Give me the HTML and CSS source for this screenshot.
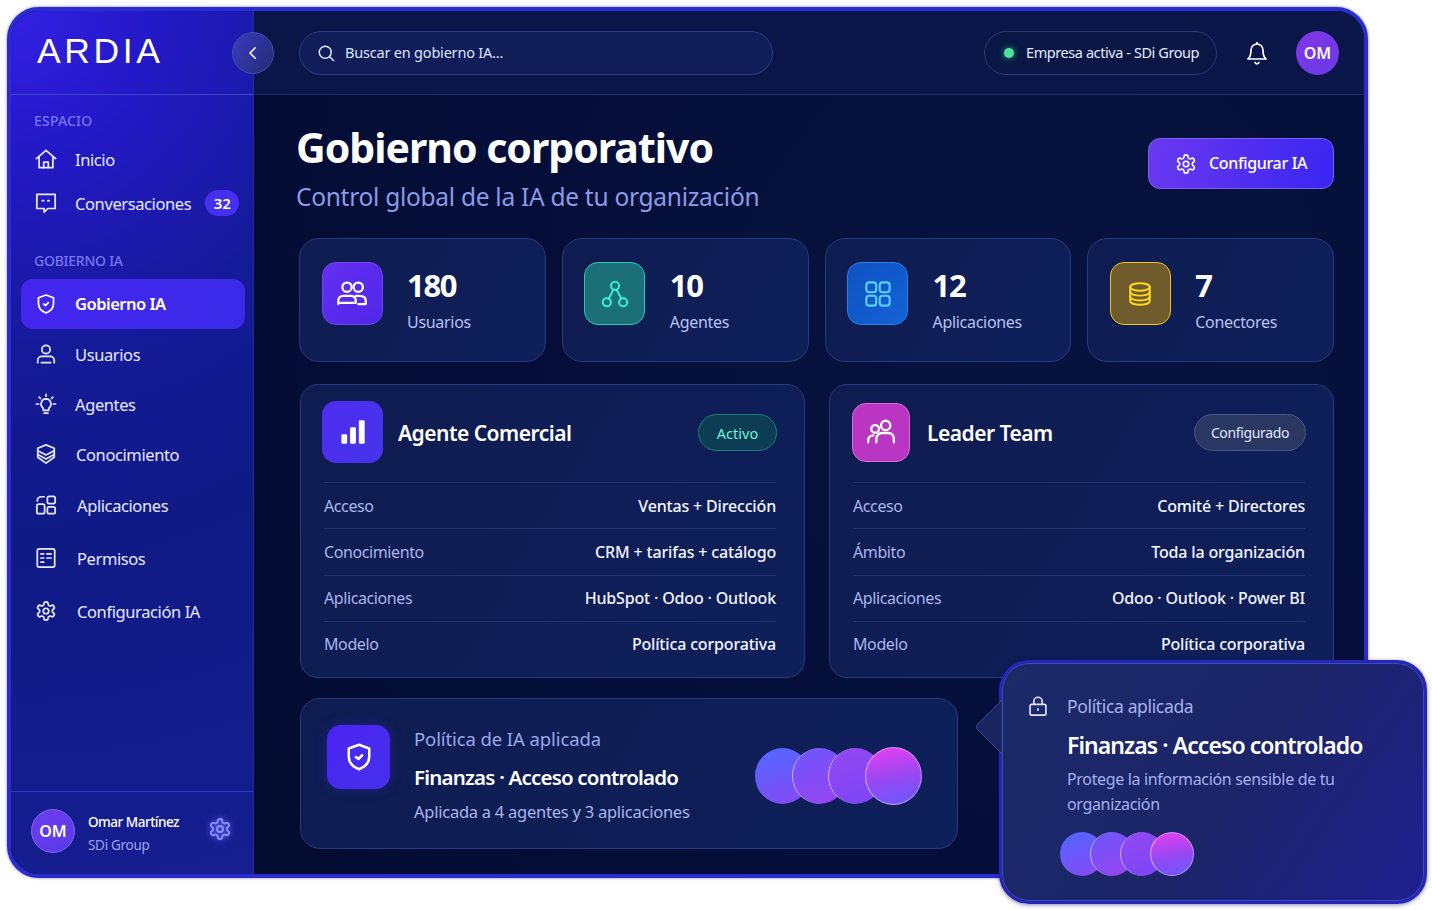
FILE: index.html
```html
<!DOCTYPE html>
<html lang="es">
<head>
<meta charset="utf-8">
<title>ARDIA - Gobierno corporativo</title>
<link rel="stylesheet" href="styles.css">
</head>
<body>
<svg class="defs" aria-hidden="true">
  <symbol id="gear" viewBox="0 0 24 24"><path d="M12.22 2h-.44a2 2 0 0 0-2 2v.18a2 2 0 0 1-1 1.73l-.43.25a2 2 0 0 1-2 0l-.15-.08a2 2 0 0 0-2.73.73l-.22.38a2 2 0 0 0 .73 2.73l.15.1a2 2 0 0 1 1 1.72v.51a2 2 0 0 1-1 1.74l-.15.09a2 2 0 0 0-.73 2.73l.22.38a2 2 0 0 0 2.73.73l.15-.08a2 2 0 0 1 2 0l.43.25a2 2 0 0 1 1 1.73V20a2 2 0 0 0 2 2h.44a2 2 0 0 0 2-2v-.18a2 2 0 0 1 1-1.73l.43-.25a2 2 0 0 1 2 0l.15.08a2 2 0 0 0 2.73-.73l.22-.39a2 2 0 0 0-.73-2.73l-.15-.08a2 2 0 0 1-1-1.74v-.5a2 2 0 0 1 1-1.74l.15-.09a2 2 0 0 0 .73-2.73l-.22-.38a2 2 0 0 0-2.73-.73l-.15.08a2 2 0 0 1-2 0l-.43-.25a2 2 0 0 1-1-1.73V4a2 2 0 0 0-2-2z"/><circle cx="12" cy="12" r="3"/></symbol>
  <symbol id="shield" viewBox="0 0 24 24"><path d="M12 2.2l8.200 3v6.300c0 4.900-3.300 8.400-8.200 10.300-4.900-1.900-8.200-5.400-8.200-10.300V5.200z"/><path d="M9.500 12l2 1.600 3-3"/></symbol>
</svg>

<div class="app">
  <aside class="sidebar">
    <div class="brand"><span class="logo">ARDIA</span></div>
    <nav class="nav">
      <p class="nav-label">ESPACIO</p>
      <a class="nav-item nav-short">
        <svg class="nav-icon" viewBox="0 0 24 24"><path d="M1.500 11.500 12 2.500l10.500 9"/><path d="M4.500 9.500V21.500h15V9.500"/><path d="M9.500 21.500v-6h5v6"/></svg>
        <span>Inicio</span>
      </a>
      <a class="nav-item nav-short">
        <svg class="nav-icon" viewBox="0 0 24 24"><path d="M2 2.500h20v15.500h-8l-4 4v-4H2z"/><path d="M8 9.500h1.500M14 9.500h1.500"/></svg>
        <span>Conversaciones</span>
        <b class="count">32</b>
      </a>
      <p class="nav-label nav-label-second">GOBIERNO IA</p>
      <a class="nav-item active">
        <svg class="nav-icon"><use href="#shield"/></svg>
        <span>Gobierno IA</span>
      </a>
      <a class="nav-item">
        <svg class="nav-icon" viewBox="0 0 24 24"><circle cx="12" cy="7" r="4.500"/><path d="M3 21.500v-2.500c0-2.500 2-4.500 4.500-4.500h9c2.500 0 4.500 2 4.500 4.500v2.500"/><path d="M7 21.500h10"/></svg>
        <span>Usuarios</span>
      </a>
      <a class="nav-item">
        <svg class="nav-icon" viewBox="0 0 24 24"><path d="M12 6.500a5.500 5.500 0 0 1 3 10v2.500H9v-2.500a5.500 5.500 0 0 1 3-10z"/><path d="M10 22h4M12 1.500v2M1.500 12h2.500M20 12h2.500M4.500 4.500l1.500 1.500M19.500 4.500 18 6"/></svg>
        <span>Agentes</span>
      </a>
      <a class="nav-item nav-text-mid">
        <svg class="nav-icon" viewBox="0 0 24 24"><path d="M12 2l9 3.800v2.700L12 13 3 8.500V5.800z"/><path d="M3 8.500v7l9 6.500 9-6.500v-7"/><path d="M3 12.500l9 5 9-5"/></svg>
        <span>Conocimiento</span>
      </a>
      <a class="nav-item nav-text-shift mt1">
        <svg class="nav-icon" viewBox="0 0 24 24"><rect x="2" y="11" width="8.500" height="10.500" rx="2"/><rect x="13.500" y="2.500" width="8.500" height="8" rx="2"/><rect x="13.500" y="14" width="8.500" height="7.500" rx="2"/><path d="M2.500 7.500c0-3 1.500-4.500 5-4.500h2.500"/></svg>
        <span>Aplicaciones</span>
      </a>
      <a class="nav-item nav-text-shift mt3">
        <svg class="nav-icon" viewBox="0 0 24 24"><rect x="2.500" y="2" width="19" height="20" rx="2"/><path d="M6.500 7.500h3M13 7.500h4.500M6.500 12h3M13 12h4.500M6.500 16.500h3"/></svg>
        <span>Permisos</span>
      </a>
      <a class="nav-item nav-text-shift mt3">
        <svg class="nav-icon"><use href="#gear"/></svg>
        <span>Configuración IA</span>
      </a>
    </nav>
    <div class="user">
      <div class="avatar avatar-user">OM</div>
      <div class="user-text">
        <strong>Omar Martínez</strong>
        <span>SDi Group</span>
      </div>
      <svg class="user-gear"><use href="#gear"/></svg>
    </div>
  </aside>

  <button class="collapse" aria-label="Contraer">
    <svg viewBox="0 0 24 24"><path d="M15 5l-7 7 7 7"/></svg>
  </button>

  <div class="workspace">
    <header class="topbar">
      <div class="search">
        <svg viewBox="0 0 24 24"><circle cx="11" cy="11" r="8"/><path d="M17 17l5 5"/></svg>
        <span>Buscar en gobierno IA...</span>
      </div>
      <div class="status"><i class="dot"></i><span>Empresa activa - SDi Group</span></div>
      <svg class="bell" viewBox="0 0 24 24"><path d="M6 9a6 6 0 0 1 12 0c0 6 1 7.500 3 9H3c2-1.500 3-3 3-9z"/><path d="M10 21.500a2.200 2.200 0 0 0 4 0M12 3V1.500"/></svg>
      <div class="avatar avatar-top">OM</div>
    </header>

    <main class="content">
      <section class="page-head">
        <div>
          <h1>Gobierno corporativo</h1>
          <p>Control global de la IA de tu organización</p>
        </div>
        <button class="primary">
          <svg><use href="#gear"/></svg>
          <span>Configurar IA</span>
        </button>
      </section>

      <section class="stats">
        <article class="stat">
          <div class="tile tile-violet"><svg viewBox="0 0 24 24"><circle cx="8" cy="6.500" r="3.700"/><circle cx="17" cy="6.500" r="3.700"/><path d="M1 20v-2.500c0-2.500 2-4 4-4h6c2.500 0 4 1.500 4 4V19H2"/><path d="M15 13.500h3c3 0 5 1.500 5 4V20h-6"/></svg></div>
          <div><strong>180</strong><span>Usuarios</span></div>
        </article>
        <article class="stat">
          <div class="tile tile-teal"><svg viewBox="0 0 24 24"><circle cx="12" cy="5" r="3.500"/><circle cx="5" cy="19" r="3.500"/><circle cx="19" cy="19" r="3.500"/><path d="M10.500 8.500 6.500 16M13.500 8.500l4 7.500"/></svg></div>
          <div><strong>10</strong><span>Agentes</span></div>
        </article>
        <article class="stat">
          <div class="tile tile-blue"><svg viewBox="0 0 24 24"><rect x="2" y="2" width="8.500" height="8.500" rx="2.500"/><rect x="13.500" y="2" width="8.500" height="8.500" rx="2.500"/><rect x="2" y="13.500" width="8.500" height="8.500" rx="2.500"/><rect x="13.500" y="13.500" width="8.500" height="8.500" rx="2.500"/></svg></div>
          <div><strong>12</strong><span>Aplicaciones</span></div>
        </article>
        <article class="stat">
          <div class="tile tile-gold"><svg viewBox="0 0 24 24"><ellipse cx="12" cy="5.500" rx="9" ry="3.500"/><path d="M3 5.500v13c0 2 4 3.500 9 3.500s9-1.500 9-3.500v-13"/><path d="M3 10c0 2 4 3.500 9 3.500s9-1.500 9-3.500"/><path d="M3 14.500c0 2 4 3.500 9 3.500s9-1.500 9-3.500"/></svg></div>
          <div><strong>7</strong><span>Conectores</span></div>
        </article>
      </section>

      <section class="agents">
        <article class="agent">
          <header class="agent-head">
            <div class="agent-icon agent-icon-violet"><svg viewBox="0 0 24 24"><rect x="2" y="14" width="5" height="8" rx="1"/><rect x="9.500" y="8" width="5" height="14" rx="1"/><rect x="17" y="2" width="5" height="20" rx="1"/></svg></div>
            <h2>Agente Comercial</h2>
            <span class="pill pill-on">Activo</span>
          </header>
          <dl>
            <div><dt>Acceso</dt><dd>Ventas + Dirección</dd></div>
            <div><dt>Conocimiento</dt><dd>CRM + tarifas + catálogo</dd></div>
            <div><dt>Aplicaciones</dt><dd>HubSpot · Odoo · Outlook</dd></div>
            <div><dt>Modelo</dt><dd>Política corporativa</dd></div>
          </dl>
        </article>
        <article class="agent">
          <header class="agent-head">
            <div class="agent-icon agent-icon-pink"><svg viewBox="0 0 24 24"><circle cx="7" cy="8.500" r="3.300"/><circle cx="16" cy="5.500" r="4"/><path d="M1 20v-2c0-2.500 2-4 4.500-4"/><path d="M8 20v-3c0-3 2.500-5 5-5h5.500c2.500 0 4.500 2 4.500 5v3"/></svg></div>
            <h2>Leader Team</h2>
            <span class="pill pill-set">Configurado</span>
          </header>
          <dl>
            <div><dt>Acceso</dt><dd>Comité + Directores</dd></div>
            <div><dt>Ámbito</dt><dd>Toda la organización</dd></div>
            <div><dt>Aplicaciones</dt><dd>Odoo · Outlook · Power BI</dd></div>
            <div><dt>Modelo</dt><dd>Política corporativa</dd></div>
          </dl>
        </article>
      </section>

      <section class="policy">
        <div class="policy-icon"><svg><use href="#shield"/></svg></div>
        <div class="policy-text">
          <p class="policy-label">Política de IA aplicada</p>
          <h3>Finanzas · Acceso controlado</h3>
          <p class="policy-sub">Aplicada a 4 agentes y 3 aplicaciones</p>
        </div>
        <div class="orbs orbs-big"><i class="orb o1"></i><i class="orb o2"></i><i class="orb o3"></i><i class="orb o4"></i></div>
      </section>
    </main>
  </div>
</div>

<aside class="popover">
  <svg class="pop-arrow" viewBox="0 0 27 56"><path d="M27 1 2.500 25.500q-2 2.500 0 5L27 55z"/></svg>
  <div class="pop-head">
    <svg viewBox="0 0 24 24"><rect x="2.500" y="10" width="19" height="13" rx="2"/><path d="M7 10V6.500a5 5 0 0 1 10 0V10"/><path d="M12 15.500v1.500"/></svg>
    <span>Política aplicada</span>
  </div>
  <h3>Finanzas · Acceso controlado</h3>
  <p>Protege la información sensible de tu organización</p>
  <div class="orbs orbs-small"><i class="orb o1"></i><i class="orb o2"></i><i class="orb o3"></i><i class="orb o4"></i></div>
</aside>
</body>
</html>
```

FILE: styles.css
```css
* { box-sizing: border-box; }
html, body { margin: 0; padding: 0; }
body {
  width: 1432px;
  height: 910px;
  position: relative;
  overflow: hidden;
  background: #fff;
  font-family: "Noto Sans", "Open Sans", sans-serif;
  color: #fff;
}
p, h1, h2, h3, dl, dd, dt { margin: 0; }
svg { display: block; fill: none; stroke: currentColor; stroke-width: 2; stroke-linecap: round; stroke-linejoin: round; }
.defs { display: none; }

.app {
  position: relative;
  margin: 7px 0 0 7px;
  width: 1361px;
  height: 871px;
  display: flex;
  border: 4px solid #2a2bd0;
  border-radius: 32px;
  overflow: hidden;
  background: #050e3c;
  box-shadow: 0 0 3px rgba(30, 30, 120, .6);
}

/* Sidebar */
.sidebar {
  width: 243px;
  flex: none;
  display: flex;
  flex-direction: column;
  background: radial-gradient(circle at 0 0, #3420e4 0, #2419c8 15%, #151a98 38%, #0f1a85 60%, #161e90 100%);
  border-right: 1px solid #26308c;
}
.brand {
  height: 84px;
  flex: none;
  padding: 20px 0 0 26px;
  border-bottom: 1px solid #3f45c8;
}
.logo {
  display: block;
  font-family: "Liberation Sans", sans-serif;
  font-size: 35.500px;
  line-height: 40px;
  letter-spacing: 3.600px;
  font-weight: 400;
}
.nav { flex: 1; padding: 0 8px 0 10px; }
.nav-label {
  font-size: 14px;
  line-height: 20px;
  letter-spacing: .2px;
  color: #7577f5;
  font-weight: 500;
  margin: 16px 0 0 13px;
}
.nav-label-second { margin-top: 26px; letter-spacing: -.25px; }
.nav-item {
  display: flex;
  align-items: center;
  height: 50px;
  padding-left: 14px;
  font-size: 16.500px;
  letter-spacing: -.4px;
  color: #e6e9ff;
  border-radius: 12px;
}
.nav-short { height: 44px; }
.nav-label + .nav-short { margin-top: 6px; }
.nav-item > span { margin-left: 18px; }
.nav-item.nav-text-mid > span { margin-left: 19px; }
.nav-item.nav-text-shift > span { margin-left: 20px; }
.nav-icon { width: 22px; height: 22px; flex: none; stroke-width: 1.900; }
.active {
  margin-top: 8px;
  background: linear-gradient(100deg, #4426ee, #3a2ae8);
  font-weight: 600;
  letter-spacing: -.5px;
  color: #fff;
}
.active > span { margin-top: -2px; }
.mt1 { margin-top: 1px; }
.mt3 { margin-top: 3px; }
.count {
  margin-left: 14px;
  width: 34px;
  height: 26px;
  border-radius: 13px;
  background: #4430ee;
  font-size: 15px;
  letter-spacing: 0;
  line-height: 26px;
  text-align: center;
  font-weight: 600;
  color: #fff;
}
.user {
  height: 83px;
  flex: none;
  display: flex;
  align-items: center;
  padding: 0 0 4px 20px;
  border-top: 1px solid #2e36c0;
}
.avatar {
  display: flex;
  align-items: center;
  justify-content: center;
  flex: none;
  border-radius: 50%;
  font-weight: 600;
}
.avatar-user {
  width: 44px;
  height: 44px;
  font-size: 16px;
  background: linear-gradient(140deg, #6d3df0, #5a3ae8);
  border: 1px solid #7f63ee;
}
.user-text { margin-left: 13px; width: 120px; padding-top: 3px; }
.user-text strong { display: block; font-size: 13.500px; letter-spacing: -.5px; line-height: 18px; font-weight: 500; margin-top: 1px; }
.user-text span { display: block; font-size: 13.500px; letter-spacing: -.3px; line-height: 18px; margin-top: 5px; color: #98a3ee; }
.user-gear { width: 24px; height: 24px; color: #8a90ff; filter: drop-shadow(0 0 3px #6a6cff); margin-top: -4px; }

.collapse {
  position: absolute;
  left: 221px;
  top: 21px;
  width: 42px;
  height: 42px;
  padding: 11px;
  border-radius: 50%;
  border: 1px solid #3d4db0;
  background: linear-gradient(120deg, #3a3bbd, #232c75);
  color: #fff;
}

/* Workspace */
.workspace { flex: 1; min-width: 0; display: flex; flex-direction: column; }
.topbar {
  height: 84px;
  flex: none;
  display: flex;
  align-items: center;
  padding: 0 25px 0 45px;
  background: #0a1548;
  border-bottom: 1px solid #1f2c66;
}
.search {
  width: 474px;
  height: 44px;
  display: flex;
  align-items: center;
  padding-left: 17px;
  gap: 10px;
  border-radius: 22px;
  background: #101d58;
  border: 1px solid #2d3d80;
  font-size: 14.500px;
  letter-spacing: -.2px;
  color: #dfe4ff;
}
.search span, .status span { margin-top: -2px; }
.search svg { width: 18px; height: 18px; }
.status {
  margin-left: auto;
  width: 233px;
  height: 44px;
  display: flex;
  align-items: center;
  padding-left: 19px;
  gap: 12px;
  border-radius: 22px;
  border: 1px solid #2a3a76;
  background: #0a1745;
  font-size: 14.500px;
  letter-spacing: -.42px;
  color: #e6e9ff;
}
.dot {
  width: 10px;
  height: 10px;
  border-radius: 50%;
  background: #4fe39c;
  box-shadow: 0 0 6px #2aa676;
}
.bell { width: 24px; height: 24px; margin-left: 28px; stroke-width: 1.700; }
.avatar-top {
  width: 43px;
  height: 44px;
  margin-left: 27px;
  font-size: 16px;
  background: linear-gradient(140deg, #8136e6, #6a3ae8);
}

.content {
  flex: 1;
  padding: 0 30px 0 45px;
  background: radial-gradient(circle at 70% 30%, #07133f 0, #040e38 60%, #030b30 100%);
}
.page-head {
  height: 143px;
  display: flex;
  justify-content: space-between;
  align-items: flex-start;
}
.page-head h1 {
  margin: 23px 0 0 -3px;
  font-size: 41px;
  line-height: 58px;
  font-weight: 700;
  letter-spacing: -1px;
}
.page-head p {
  margin: 5px 0 0 -3px;
  font-size: 24.500px;
  letter-spacing: -.28px;
  line-height: 32px;
  color: #8d9be6;
}
.primary {
  margin-top: 43px;
  width: 186px;
  height: 51px;
  display: flex;
  align-items: center;
  padding: 0 0 0 26px;
  gap: 12px;
  border-radius: 12px;
  border: 1px solid #7e5ff0;
  background: linear-gradient(100deg, #6a38f0, #3a26f0);
  font: 500 16px "Noto Sans", sans-serif;
  letter-spacing: -.35px;
  color: #fff;
}
.primary span { margin-top: -2px; }
.primary svg { width: 22px; height: 22px; stroke-width: 1.800; }

.stats { display: flex; gap: 16px; }
.stat {
  flex: 1;
  height: 124px;
  display: flex;
  align-items: flex-start;
  padding: 23px 0 0 21.500px;
  gap: 24.500px;
  border: 1px solid #293a7c;
  border-radius: 20px;
  background: linear-gradient(120deg, #0e1c50, #0f1f5a);
}
.stat strong {
  display: block;
  font-size: 31px;
  line-height: 42px;
  font-weight: 700;
  letter-spacing: -1.300px;
  margin-top: 2px;
}
.stat span { display: block; font-size: 16px; letter-spacing: -.3px; line-height: 22px; margin-top: 5px; color: #b7c1f2; }
.tile {
  width: 61px;
  height: 63px;
  flex: none;
  border-radius: 14px;
  display: flex;
  align-items: center;
  justify-content: center;
  border: 1px solid transparent;
}
.tile svg { width: 30px; height: 30px; stroke-width: 1.800; }
.tile-violet { background: linear-gradient(135deg, #6430f2, #5126e8); border-color: #6f46f0; }
.tile-teal { background: #1b6f77; border-color: #2fc8b8; color: #3ce8d6; }
.tile-teal svg { width: 28px; height: 28px; }
.tile-blue { background: linear-gradient(135deg, #0f52c2, #1462d6); border-color: #2182ec; color: #5cd0ff; }
.tile-blue svg { width: 28px; height: 28px; }
.tile-gold { background: #6f5b2c; border-color: #f2c41c; color: #ffd91e; }
.tile-gold svg { width: 26px; height: 28px; }

.agents { display: flex; gap: 24px; margin-top: 22px; padding-left: 1px; }
.agent {
  flex: 1;
  height: 294px;
  border: 1px solid #2a3b7c;
  border-radius: 18px;
  padding: 0 28px 0 23px;
  background: linear-gradient(120deg, #0e1c50, #0f1f5a);
}
.agent-head { height: 98px; padding-bottom: 2px; display: flex; align-items: center; border-bottom: 1px solid #22336f; }
.agent-head h2 { font-size: 21px; line-height: 30px; font-weight: 600; margin-left: 15px; letter-spacing: -.5px; }
.agent-icon {
  width: 61px;
  height: 62px;
  flex: none;
  margin: -1px 0 0 -2px;
  border-radius: 14px;
  display: flex;
  align-items: center;
  justify-content: center;
}
.agent-icon svg { width: 28px; height: 28px; }
.agent-icon-violet { background: linear-gradient(135deg, #4f2df0, #4534ea); }
.agent-icon-violet svg { fill: #fff; stroke: none; }
.agent-icon-pink { width: 58px; height: 59px; margin: 0 0 0 -1px; background: #b935c2; border: 1px solid #d86fd8; }
.agent-icon-pink + h2 { margin-left: 17px; }
.pill {
  margin-left: auto;
  margin-right: -1px;
  height: 37px;
  border-radius: 19px;
  display: flex;
  align-items: center;
  justify-content: center;
  font-size: 14.500px;
}
.pill-on { width: 79px; color: #6ff0dc; background: #0d3d52; border: 1px solid #1f7c7c; }
.pill-set { width: 112px; font-size: 14px; letter-spacing: -.35px; color: #e0e5fa; background: #2a3762; border: 1px solid #4a5788; }
dl > div {
  height: 46.300px;
  display: flex;
  align-items: center;
  justify-content: space-between;
  border-bottom: 1px solid #22336f;
  font-size: 16px;
}
dl > div:last-child { border-bottom: 0; padding-bottom: 2px; }
dt { color: #aab5ec; letter-spacing: -.4px; }
dd { font-weight: 500; letter-spacing: -.17px; color: #f3f5ff; }

.policy {
  width: 658px;
  height: 151px;
  margin: 20px 0 0 1px;
  display: flex;
  align-items: flex-start;
  padding: 26px 0 0 26px;
  border: 1px solid #2a3b7c;
  border-radius: 20px;
  background: linear-gradient(120deg, #0e1c50, #0f1f5a);
}
.policy-icon {
  width: 63px;
  height: 64px;
  flex: none;
  border-radius: 14px;
  background: linear-gradient(135deg, #4a24f2, #4630ec);
  box-shadow: 0 0 12px rgba(70, 40, 240, .35);
  display: flex;
  align-items: center;
  justify-content: center;
}
.policy-icon svg { width: 30px; height: 30px; }
.policy-text { margin-left: 24px; width: 340px; }
.policy-label { font-size: 18.500px; line-height: 26px; color: #9aa8ec; margin-top: 1px; letter-spacing: -.1px; }
.policy h3 { font-size: 20.500px; line-height: 28px; font-weight: 600; margin-top: 11px; letter-spacing: -.8px; white-space: nowrap; }
.policy-sub { font-size: 16.500px; letter-spacing: -.25px; line-height: 24px; margin-top: 9px; color: #aab5ec; }

.orbs { display: flex; }
.orb {
  display: block;
  flex: none;
  border-radius: 50%;
}
.orbs .orb + .orb { border-left: 1px solid rgba(255, 255, 255, .55); }
.o1 { background: linear-gradient(160deg, #5a62ff 20%, #8a48f5 100%); }
.o2 { background: linear-gradient(160deg, #7055fb 10%, #9a44f0 100%); }
.o3 { background: linear-gradient(160deg, #9248f2 10%, #7a46f6 100%); }
.o4 { background: linear-gradient(170deg, #e23ff0 5%, #9548f2 55%, #6a58ff 100%); border: 1px solid rgba(255, 255, 255, .4); }
.orbs-big { margin: 23px 0 0 1px; }
.orbs-big .orb { width: 55px; height: 56px; }
.orbs-big .orb + .orb { margin-left: -18.500px; }
.orbs-big .o4 { width: 57px; height: 58px; margin-top: -1px; }

/* Floating policy card */
.popover {
  position: absolute;
  left: 999px;
  top: 660px;
  width: 428px;
  height: 244px;
  padding: 31px 0 0 26px;
  border: 3px solid #2526b8;
  border-radius: 30px;
  background: linear-gradient(125deg, #1c2a68 0, #1b2568 55%, #201f90 100%);
  box-shadow: inset 0 0 0 1px #3c4db4, 0 1px 4px rgba(20, 20, 100, .5);
}
.pop-arrow {
  position: absolute;
  left: -27px;
  top: 36px;
  width: 27px;
  height: 56px;
  fill: #1a2560;
  stroke: #3a49a0;
  stroke-width: 1;
}
.pop-head { display: flex; align-items: center; gap: 19px; color: #a7b2ee; font-size: 17.500px; letter-spacing: -.35px; line-height: 24px; }
.pop-head svg { width: 20px; height: 24px; color: #e0e4ff; }
.popover h3 { font-size: 23px; line-height: 32px; font-weight: 600; margin: 11px 0 0 39px; letter-spacing: -.93px; white-space: nowrap; }
.popover p { width: 290px; font-size: 16px; letter-spacing: -.34px; line-height: 25px; margin: 6px 0 0 39px; color: #a4b0ee; }
.orbs-small { margin: 15px 0 0 32px; }
.orbs-small .orb { width: 44px; height: 44px; }
.orbs-small .orb + .orb { margin-left: -14px; }
```
